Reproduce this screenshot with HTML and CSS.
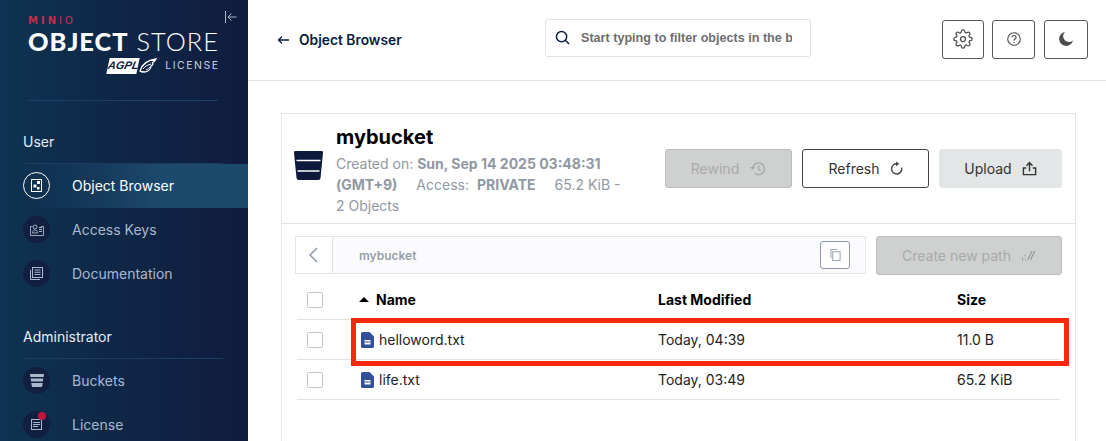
FILE: index.html
```html
<!DOCTYPE html>
<html lang="en">
<head>
<meta charset="utf-8">
<title>Object Browser</title>
<link rel="stylesheet" href="styles.css">
</head>
<body>
<div class="app">
  <aside class="sidebar">
    <svg class="collapse" viewBox="0 0 12 12" width="12" height="12"><path d="M.5 0v12M11.500 6H3M6.500 2.500 3 6l3.500 3.500" fill="none" stroke="#aab6c6" stroke-width="1"/></svg>
    <div class="logo">
      <div class="logo-minio"><b>MIN</b>IO</div>
      <div class="logo-title"><b>OBJECT</b> STORE</div>
      <div class="logo-license">
        <span class="agpl"><i>AGPL</i></span>
        <svg class="wing" viewBox="0 0 18 16" width="18" height="16"><path d="M1 13C3 6 9 2 17 1c-1 2-2 3-3.500 3.500C14.500 6 13 7.500 12 8c0 3-3 6-6.500 6C3.500 14 2 14 1 13z" fill="none" stroke="#fff" stroke-width="1.300"/><path d="M4 11c2-3 5-4 8-5M7 12c2-1 3-2 4-3" fill="none" stroke="#fff"/></svg>
        <span class="license-word">LICENSE</span>
      </div>
    </div>
    <div class="logo-rule"></div>
    <div class="nav-title">User</div>
    <nav class="nav">
      <a class="nav-item active">
        <span class="nav-icon"><svg viewBox="0 0 11 13" width="11" height="13"><rect x=".5" y=".5" width="10" height="12" fill="none" stroke="#fff"/><path d="M6 2h3v3H6zM2.500 5.500h3v3h-3zM6 8h2.500v2.500H6z" fill="#fff"/></svg></span>
        <span>Object Browser</span>
      </a>
      <a class="nav-item">
        <span class="nav-icon"><svg viewBox="0 0 14 12" width="14" height="12"><path d="M.5 2.500h2M11 2.500h2.500v9H.5v-9" fill="none" stroke="#a9b8cc" stroke-width=".9"/><circle cx="5" cy="3" r="2" fill="none" stroke="#a9b8cc" stroke-width=".9"/><path d="M2.500 9c0-2 1-3 2.500-3s2.500 1 2.500 3z" fill="none" stroke="#a9b8cc" stroke-width=".9"/><path d="M9 3h3v1H9zM9 5h3v1H9zM9 7h3v1H9z" fill="#a9b8cc"/></svg></span>
        <span>Access Keys</span>
      </a>
      <a class="nav-item">
        <span class="nav-icon"><svg viewBox="0 0 13 13" width="13" height="13"><path d="M.5 3v9.500H10" fill="none" stroke="#a9b8cc"/><rect x="2.500" y=".5" width="10" height="10" fill="none" stroke="#a9b8cc"/><path d="M4.500 2.500h6v1h-6zM4.500 4.800h6v1h-6zM4.500 7.100h6v1h-6z" fill="#a9b8cc"/></svg></span>
        <span>Documentation</span>
      </a>
    </nav>
    <div class="nav-title admin">Administrator</div>
    <nav class="nav">
      <a class="nav-item">
        <span class="nav-icon"><svg viewBox="0 0 14 13" width="14" height="13"><path d="M0 0h14l-.4 3H.4zM.7 4.500h12.600l-.4 3H1.100zM1.300 9h11.400l-.5 3.200a1 1 0 0 1-1 .8H2.800a1 1 0 0 1-1-.8z" fill="#a9b8cc"/></svg></span>
        <span>Buckets</span>
      </a>
      <a class="nav-item">
        <span class="nav-icon"><svg viewBox="0 0 11 11" width="11" height="11"><rect x=".5" y=".5" width="10" height="10" fill="none" stroke="#a9b8cc"/><path d="M2 3h7v1H2zM2 5h7v1H2zM2 7h5v1H2z" fill="#a9b8cc"/></svg><span class="badge"></span></span>
        <span>License</span>
      </a>
    </nav>
  </aside>

  <main class="main">
    <header class="topbar">
      <a class="back">
        <svg viewBox="0 0 12 10" width="12" height="10"><path d="M12 5H2M5 1.500 1.500 5 5 8.500" fill="none" stroke="#081c42" stroke-width="1.300"/></svg>
        <span>Object Browser</span>
      </a>
      <div class="search">
        <svg viewBox="0 0 16 16" width="15" height="15"><circle cx="7" cy="7" r="5.500" fill="none" stroke="#081c42" stroke-width="1.600"/><path d="m11 11 4 4" stroke="#081c42" stroke-width="1.600"/></svg>
        <span class="placeholder">Start typing to filter objects in the bucket</span>
      </div>
      <div class="tools">
        <button class="tool gear"><svg viewBox="0 0 24 24" width="20" height="20" fill="none" stroke="#4b4b4b" stroke-width="1.500"><circle cx="12" cy="12" r="3"/><path d="M19.400 15a1.650 1.650 0 0 0 .33 1.820l.06.06a2 2 0 0 1 0 2.830 2 2 0 0 1-2.830 0l-.06-.06a1.650 1.650 0 0 0-1.820-.33 1.650 1.650 0 0 0-1 1.510V21a2 2 0 0 1-2 2 2 2 0 0 1-2-2v-.09A1.650 1.650 0 0 0 9 19.400a1.650 1.650 0 0 0-1.820.33l-.06.06a2 2 0 0 1-2.830 0 2 2 0 0 1 0-2.830l.06-.06a1.650 1.650 0 0 0 .33-1.820 1.650 1.650 0 0 0-1.510-1H3a2 2 0 0 1-2-2 2 2 0 0 1 2-2h.09A1.650 1.650 0 0 0 4.600 9a1.650 1.650 0 0 0-.33-1.820l-.06-.06a2 2 0 0 1 0-2.830 2 2 0 0 1 2.830 0l.06.06a1.650 1.650 0 0 0 1.820.33H9a1.650 1.650 0 0 0 1-1.510V3a2 2 0 0 1 2-2 2 2 0 0 1 2 2v.09a1.650 1.650 0 0 0 1 1.510 1.650 1.650 0 0 0 1.820-.33l.06-.06a2 2 0 0 1 2.830 0 2 2 0 0 1 0 2.830l-.06.06a1.650 1.650 0 0 0-.33 1.820V9a1.650 1.650 0 0 0 1.510 1H21a2 2 0 0 1 2 2 2 2 0 0 1-2 2h-.09a1.650 1.650 0 0 0-1.510 1z"/></svg></button>
        <button class="tool help"><svg viewBox="0 0 14 14" width="14" height="14" fill="none" stroke="#4b4b4b" stroke-width="1.100"><circle cx="7" cy="7" r="6.300"/><path d="M5 5.500A2 2 0 1 1 7.800 7.300C7.200 7.600 7 8 7 8.800"/><path d="M7 10v1" stroke-width="1.200"/></svg></button>
        <button class="tool moon"><svg viewBox="0 0 14 14" width="14" height="14"><path d="M6 0a5 5 0 0 0 8 8.500A7 7 0 1 1 6 0z" fill="#4b4b4b"/></svg></button>
      </div>
    </header>

    <section class="panel">
      <div class="panel-head">
        <svg class="bucket" viewBox="0 0 29 29" width="29" height="29"><path d="M1.500 0h26A1.500 1.500 0 0 1 29 1.700L26.500 27a2.200 2.200 0 0 1-2.200 2H4.700a2.200 2.200 0 0 1-2.200-2L0 1.700A1.500 1.500 0 0 1 1.500 0z" fill="#0e1a3c"/><path d="M2.500 9.500h24M3.500 20h22" stroke="#fff" stroke-width="1.500"/></svg>
        <div class="info">
          <h1>mybucket</h1>
          <p class="meta">Created on: <b>Sun, Sep 14 2025 03:48:31 (GMT+9)</b><span class="gap">Access:</span><b class="priv">PRIVATE</b><span class="gap">65.2 KiB - 2 Objects</span></p>
        </div>
        <div class="actions">
          <button class="btn disabled rewind">Rewind <svg viewBox="0 0 16 14" width="17" height="15" fill="none" stroke="#a8aaaa" stroke-width="1.300"><path d="M3.500 7a5.500 5.500 0 1 1 2 4.500"/><path d="M.8 5.500h5L3.500 8.500z" fill="#a8aaaa" stroke="none"/><path d="M9 4v3.500l2 1.500"/></svg></button>
          <button class="btn outline refresh">Refresh <svg viewBox="0 0 14 15" width="13" height="15" fill="none" stroke="#444" stroke-width="1.500"><path d="M8 2.500a5.500 5.500 0 1 0 4.500 4"/><path d="M6.500 0v5l3.500-2.500z" fill="#444" stroke="none"/></svg></button>
          <button class="btn soft upload">Upload <svg viewBox="0 0 16 15" width="15" height="15" fill="none" stroke="#333" stroke-width="1.500"><path d="M4.500 7H1.500v7h13V7h-3"/><path d="M8 10.500V1.500M4.800 4.500 8 1.200l3.200 3.300"/></svg></button>
        </div>
      </div>

      <div class="path-row">
        <div class="crumbs">
          <span class="crumb-back"><svg viewBox="0 0 10 16" width="10" height="16"><path d="M9 1 2 8l7 7" fill="none" stroke="#8d99a6" stroke-width="1.500"/></svg></span>
          <span class="crumb-name">mybucket</span>
          <span class="copy"><svg viewBox="0 0 12 13" width="11" height="12" fill="none" stroke="#8d99a6" stroke-width="1"><rect x="3" y="3" width="8" height="9.500"/><path d="M1 10V.5h7"/></svg></span>
        </div>
        <button class="btn disabled newpath">Create new path <svg viewBox="0 0 16 12" width="15" height="11" fill="none" stroke="#8f9191" stroke-width="1.100"><path d="M7 11 12 1M10 11l5-10"/><path d="M1 9h1M4 6h1M1 11h1M4 11h1" stroke-width="1.500"/></svg></button>
      </div>

      <div class="table">
        <div class="row head">
          <span class="check"></span>
          <span class="c-name"><svg class="sort" viewBox="0 0 10 5" width="10" height="5"><path d="M5 0l5 5H0z" fill="#000"/></svg>Name</span>
          <span class="c-mod">Last Modified</span>
          <span class="c-size">Size</span>
        </div>
        <div class="row">
          <span class="check"></span>
          <span class="c-name file"><svg viewBox="0 0 13 16" width="13" height="16"><path fill-rule="evenodd" d="M1.500 0H8.500L13 4.500v10a1.500 1.500 0 0 1-1.500 1.500h-10A1.500 1.500 0 0 1 0 14.500v-13A1.500 1.500 0 0 1 1.500 0zM3.500 8v4.500h6V8z" fill="#32509a"/><path d="M3.500 10h6" stroke="#32509a"/></svg>helloword.txt</span>
          <span class="c-mod">Today, 04:39</span>
          <span class="c-size">11.0 B</span>
        </div>
        <div class="row">
          <span class="check"></span>
          <span class="c-name file"><svg viewBox="0 0 13 16" width="13" height="16"><path fill-rule="evenodd" d="M1.500 0H8.500L13 4.500v10a1.500 1.500 0 0 1-1.500 1.500h-10A1.500 1.500 0 0 1 0 14.500v-13A1.500 1.500 0 0 1 1.500 0zM3.500 8v4.500h6V8z" fill="#32509a"/><path d="M3.500 10h6" stroke="#32509a"/></svg>life.txt</span>
          <span class="c-mod">Today, 03:49</span>
          <span class="c-size">65.2 KiB</span>
        </div>
      </div>
    </section>
  </main>
  <div class="highlight"></div>
</div>
</body>
</html>
```
FILE: styles.css
```css
* { box-sizing: border-box; }
html, body { margin: 0; height: 100%; overflow: hidden; background: #fff; }
body { font-family: Inter, "Liberation Sans", sans-serif; color: #000; }
button { font-family: inherit; margin: 0; cursor: pointer; }
h1, p { margin: 0; }

.app { position: relative; display: flex; width: 1106px; height: 441px; overflow: hidden; }

/* Sidebar */
.sidebar {
  position: relative;
  flex: 0 0 248px;
  background: linear-gradient(90deg, #0f3352 0%, #0f2747 45%, #101c3e 100%);
  color: #fff;
  padding-top: 15px;
}
.collapse { position: absolute; top: 11px; left: 225px; }
.logo { margin-left: 28px; width: 190px; height: 63px; }
.logo-minio { font: 400 10px/12px "DejaVu Sans", sans-serif; letter-spacing: 3px; color: #c9354f; height: 14px; }
.logo-minio b { font-weight: 700; color: #c72c48; }
.logo-title { font: 300 25.400px/24px Lato, sans-serif; letter-spacing: 1px; white-space: nowrap; height: 24px; }
.logo-title b { font-weight: 900; }
.logo-license { display: flex; align-items: center; justify-content: flex-end; height: 20px; margin-top: 3px; }
.agpl { display: inline-block; width: 30px; height: 16px; background: #fff; color: #10203f; font: 900 11px/15px "Liberation Sans", sans-serif; text-align: center; transform: skewX(-12deg); }
.wing { margin: 0 8px 0 1px; }
.license-word { font: 400 10.500px/12px Inter, sans-serif; letter-spacing: 1.500px; margin-right: -1.500px; color: #c8d0dc; }
.logo-rule { height: 1px; width: 190px; margin: 22px 0 0 28px; background: #1c4068; }
.nav-title { font-size: 14px; line-height: 17px; color: #e8edf3; margin: 32px 25px 0 23px; padding-bottom: 13px; border-bottom: 1px solid #1c3c60; }
.nav-title.admin { margin-top: 32px; }
.nav-item { display: flex; align-items: center; height: 44px; padding: 0 0 1px 23px; font-size: 14px; color: #a9b8cc; }
.nav-item.active { color: #fff; background: linear-gradient(90deg, rgba(28,74,108,0) 10%, #1c4a6c 65%); }
.nav-icon { position: relative; display: flex; align-items: center; justify-content: center; flex: 0 0 27px; height: 27px; margin-right: 22px; border-radius: 50%; background: #111f40; }
.active .nav-icon { background: transparent; border: 1px solid #fff; }
.badge { position: absolute; top: 1px; left: 15px; width: 8px; height: 8px; border-radius: 50%; background: #c3143c; }

/* Main */
.main { flex: 1; min-width: 0; display: flex; flex-direction: column; }
.topbar { position: relative; display: flex; align-items: center; flex: 0 0 81px; border-bottom: 1px solid #e5e5e5; padding-left: 29px; }
.back { display: flex; align-items: center; gap: 10px; width: 268px; font-size: 13.800px; font-weight: 600; color: #081c42; }
.search { display: flex; align-items: center; gap: 11px; width: 266px; height: 38px; margin-top: -5px; padding: 0 18px 0 9px; border: 1px solid #e2e2e2; border-radius: 3px; overflow: hidden; }
.search svg { flex: none; }
.placeholder { flex: 1; overflow: hidden; white-space: nowrap; font: 700 12.600px/16px "Liberation Sans", sans-serif; color: #6e6e6e; }
.tools { display: flex; gap: 8px; margin-left: 131px; margin-top: -2px; }
.tool { display: flex; align-items: center; justify-content: center; height: 39px; padding: 0; background: #fff; border: 1px solid #555; border-radius: 3px; }
.gear { width: 42px; }
.help { width: 43px; }
.moon { width: 44px; margin-left: 1px; }

.panel { margin: 32px 30px 0 33px; flex: 1; border: 1px solid #e5e5e5; border-bottom: 0; }
.panel-head { display: flex; height: 110px; border-bottom: 1px solid #e5e5e5; padding-left: 12px; }
.bucket { flex: none; margin-top: 37px; }
.info { width: 290px; margin-left: 13px; padding-top: 11px; }
h1 { font-size: 20px; line-height: 24px; font-weight: 700; }
.meta { margin-top: 4px; font-size: 14px; line-height: 21px; color: #8f98a3; }
.meta b { font-weight: 700; color: #8f98a3; }
.gap { margin-left: 19px; }
.priv { margin-left: 8px; }
.actions { display: flex; gap: 10px; margin-left: 39px; padding-top: 35px; }
.btn { display: flex; align-items: center; justify-content: center; gap: 10px; height: 39px; padding: 0; font-size: 14px; border-radius: 3px; }
.disabled { background: #cfd1d0; border: 1px solid #bbbcbc; color: #a8aaaa; }
.outline { background: #fff; border: 1px solid #444; color: #333; }
.soft { background: #e3e6e6; border: 1px solid #e3e6e6; color: #333; }
.rewind, .refresh { width: 127px; }
.upload { width: 123px; }

.path-row { display: flex; gap: 10px; padding: 12px 0 0 13px; }
.crumbs { display: flex; align-items: center; width: 571px; height: 38px; background: #fbfbfd; border: 1px solid #e5e5e5; }
.crumb-back { display: flex; align-items: center; justify-content: center; width: 37px; height: 100%; padding-right: 2px; background: #fff; border-right: 1px solid #e5e5e5; }
.crumb-name { flex: 1; padding-left: 26px; font-size: 12px; font-weight: 600; color: #969fa8; }
.copy { display: flex; align-items: center; justify-content: center; width: 30px; height: 28px; margin-right: 15px; border: 1px solid #8d99a6; border-radius: 3px; background: #fff; }
.newpath { width: 186px; }

.table { margin: 5px 15px 0 15px; }
.row { display: flex; align-items: center; height: 40px; border-bottom: 1px solid #e2e2e2; font-size: 14px; color: #222; }
.row.head { height: 40px; color: #000; font-weight: 700; }
.check { flex: none; width: 16px; height: 16px; margin-left: 10px; border: 1px solid #c4c4c4; border-radius: 2px; background: #fff; }
.c-name { display: flex; align-items: center; width: 299px; margin-left: 36px; }
.sort { margin: 0 7px 0 0; }
.c-mod { width: 299px; }
.file { padding-left: 2px; }
.file svg { margin-right: 5px; }

.highlight { position: absolute; left: 351px; top: 318px; width: 718px; height: 48px; border: 5px solid #f52a0c; pointer-events: none; }
```
